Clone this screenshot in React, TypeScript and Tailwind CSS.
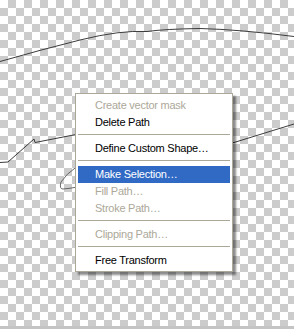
import React from "react";

type Item =
  | { kind: "item"; label: string; disabled?: boolean; active?: boolean }
  | { kind: "sep" };

const items: Item[] = [
  { kind: "item", label: "Create vector mask", disabled: true },
  { kind: "item", label: "Delete Path" },
  { kind: "sep" },
  { kind: "item", label: "Define Custom Shape…" },
  { kind: "sep" },
  { kind: "item", label: "Make Selection…", active: true },
  { kind: "item", label: "Fill Path…", disabled: true },
  { kind: "item", label: "Stroke Path…", disabled: true },
  { kind: "sep" },
  { kind: "item", label: "Clipping Path…", disabled: true },
  { kind: "sep" },
  { kind: "item", label: "Free Transform" },
];

export default function App() {
  return (
    <div className="relative w-[294px] h-[329px] overflow-hidden flex flex-col">
      <div className="relative flex-1 bg-[conic-gradient(#cccccc_25%,#ffffff_0_50%,#cccccc_0_75%,#ffffff_0)] bg-[length:16px_16px]">
        <svg
          className="absolute inset-0"
          width="294"
          height="326"
          viewBox="0 0 294 326"
          fill="none"
        >
          <path
            d="M0 61.5 Q40 50 80 40 T147 31.5 Q165 29 200 28.5 Q240 29.5 294 36.5"
            stroke="#3c3c3c"
            strokeWidth="1"
          />
          <polyline
            points="0,162.5 8,162 34,139 35,142.5 76,134.5 150,138 234,142.5 294,124"
            stroke="#3c3c3c"
            strokeWidth="1"
          />
          <path
            d="M77 166.5 Q66 174 61 182 Q59 189 63 189 Q70 188.5 77 187"
            stroke="#5a5a5a"
            strokeWidth="0.9"
          />
        </svg>
        <div
          className="absolute left-[75px] top-[93px] w-[158px] bg-white border border-[#aca899] pt-[3px] pb-[2px] px-[2px] shadow-[3px_3px_2px_rgba(0,0,0,0.45)] text-[11px] leading-[17px] tracking-[-0.25px]"
          style={{ fontFamily: '"Liberation Sans", Arial, sans-serif' }}
        >
          {items.map((it, i) =>
            it.kind === "sep" ? (
              <div key={i} className="h-[9px] pt-[3px]">
                <div className="h-px bg-[#aca899]" />
              </div>
            ) : (
              <div
                key={i}
                className={
                  "h-[17px] pl-[17px] whitespace-nowrap " +
                  (it.active
                    ? "bg-[#316ac5] text-white"
                    : it.disabled
                    ? "text-[#aca899]"
                    : "text-black")
                }
              >
                {it.label}
              </div>
            )
          )}
        </div>
      </div>
      <div className="h-[3px] bg-[#c4c4c4]" />
    </div>
  );
}
